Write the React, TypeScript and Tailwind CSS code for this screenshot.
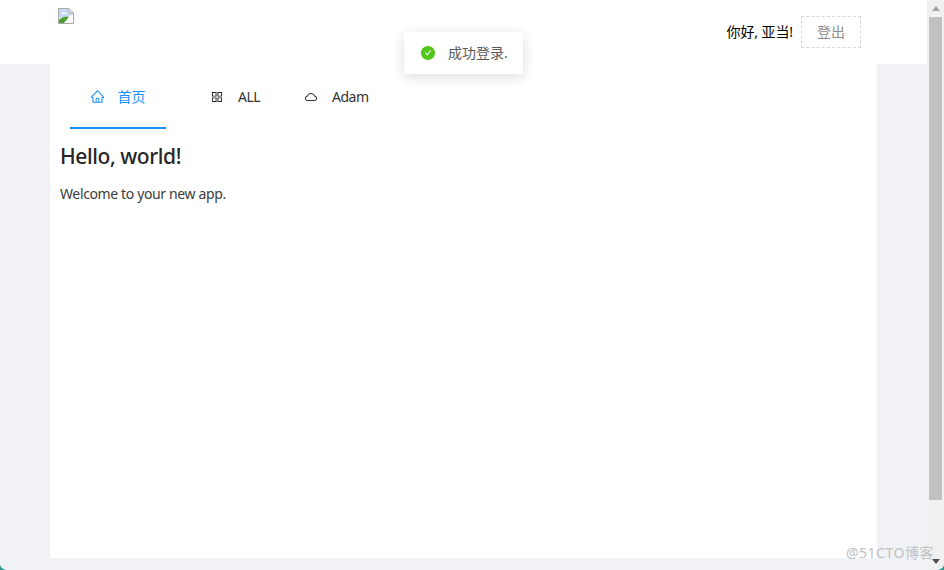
import React from "react";
import { AiOutlineHome, AiOutlineAppstore, AiOutlineCloud, AiFillCheckCircle } from "react-icons/ai";

const font = "font-['Noto_Sans','Noto_Sans_CJK_SC',sans-serif]";

function BrokenImage() {
  return (
    <svg width="16" height="16" viewBox="0 0 16 16" className="block">
      <path d="M0.5 0.5H11L15.5 5V15.5H0.5Z" fill="#fff" stroke="#a8a8a8" />
      <path d="M1 1H10.5V5.5H15V7L1 10Z" fill="#c3d7f7" />
      <path d="M3 6c1-2 3-2 4-1h2v1H3Z" fill="#fff" />
      <path d="M1 15V12C5 8.500 8 8 11 9L6 15Z" fill="#4f9e33" />
      <path d="M8 15L15 8V9.500L10 15Z" fill="#fff" />
      <path d="M11 1V5H15" fill="#e8e8e8" stroke="#a8a8a8" />
    </svg>
  );
}

function Scrollbar() {
  return (
    <div className="w-[17px] shrink-0 h-full bg-[#f1f1f1] flex flex-col items-center">
      <div className="h-[17px] w-full flex items-center justify-center">
        <svg width="8" height="5" viewBox="0 0 8 5"><path d="M4 0L8 5H0Z" fill="#a3a3a3" /></svg>
      </div>
      <div className="w-[13px] flex-1 bg-[#c1c1c1] mb-[53px]"></div>
      <div className="h-[17px] w-full flex items-center justify-center">
        <svg width="8" height="5" viewBox="0 0 8 5"><path d="M4 5L8 0H0Z" fill="#505050" /></svg>
      </div>
    </div>
  );
}

export default function App() {
  return (
    <div className={`${font} relative w-[944px] h-[570px] overflow-hidden flex bg-[#f0f2f5]`}>
      <div className="flex-1 flex flex-col min-w-0">
        <header className="h-16 shrink-0 bg-white flex items-start justify-between pl-[58px] pr-[66px]">
          <div className="pt-2"><BrokenImage /></div>
          <div className="flex items-center pt-4 gap-2">
            <span className="text-sm leading-[32px] text-black -tracking-[0.1px]">你好, 亚当!</span>
            <button className="w-[60px] h-8 border border-dashed border-[#d9d9d9] text-sm text-[#8c8c8c] bg-white">登出</button>
          </div>
        </header>
        <main className="flex-1 ml-[50px] mr-[50px] bg-white px-[10px]">
          <nav className="flex h-[65px] pl-[10px] text-sm text-[#333333] -tracking-[0.5px]">
            <div className="w-[96px] h-[65px] pl-5 pt-[2px] flex items-center gap-[13px] text-[#1890ff] border-b-2 border-[#1890ff] tracking-normal">
              <AiOutlineHome size={15} className="-ml-[0.5px]" />
              <span>首页</span>
            </div>
            <div className="ml-[25px] w-[89px] pl-[19px] flex items-center gap-[14px]">
              <AiOutlineAppstore size={14} className="text-[#262626]" />
              <span>ALL</span>
            </div>
            <div className="ml-1 pl-5 flex items-center gap-[14px]">
              <AiOutlineCloud size={14} />
              <span>Adam</span>
            </div>
          </nav>
          <h1 className="mt-[12px] text-[21px] leading-[30px] font-medium text-[#262626] -tracking-[0.4px]">Hello, world!</h1>
          <p className="mt-[12px] text-sm leading-[22px] text-[#3d3d3d] -tracking-[0.37px]">Welcome to your new app.</p>
        </main>
        <div className="h-3 shrink-0"></div>
      </div>
      <Scrollbar />

      <div className="absolute left-[404px] top-8 w-[119px] h-[42px] bg-white rounded-[2px] shadow-[0_3px_14px_rgba(0,0,0,0.14)] flex items-center pl-[16px] gap-[12px] text-sm text-[#595959]">
        <AiFillCheckCircle size={16} className="text-[#52c41a]" />
        <span className="whitespace-nowrap">成功登录.</span>
      </div>

      <div className="absolute left-[846px] top-[544px] text-sm leading-[18px] text-[#c0c0c0] whitespace-nowrap tracking-[0.5px]">@51CTO博客</div>

      <svg className="absolute left-0 bottom-0" width="6" height="6" viewBox="0 0 6 6"><path d="M0 0C0 3 2 5 6 6H0Z" fill="#2e9c8c" /></svg>
      <svg className="absolute right-0 bottom-0" width="6" height="6" viewBox="0 0 6 6"><path d="M6 0C6 3 4 5 0 6H6Z" fill="#2e9c8c" /></svg>
    </div>
  );
}
